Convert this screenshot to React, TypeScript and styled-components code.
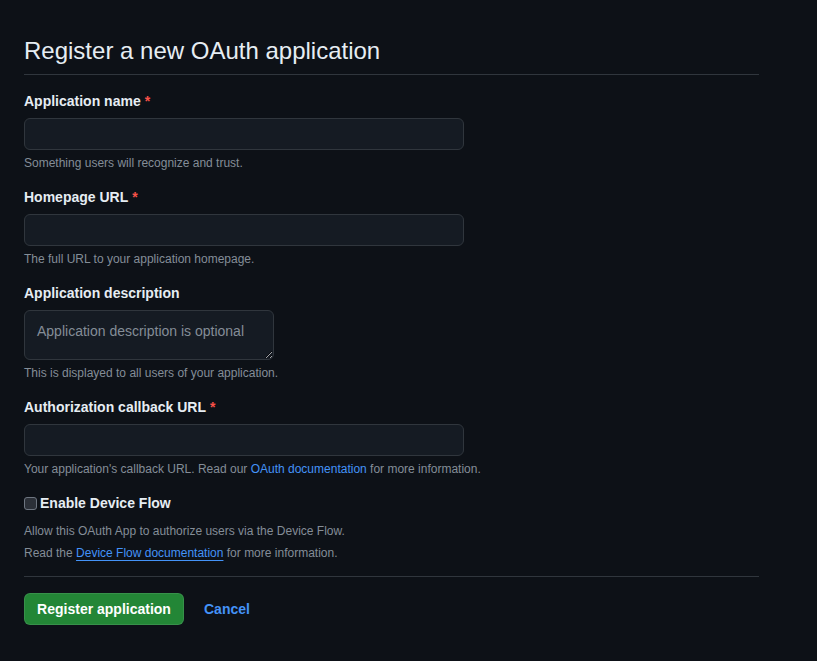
import React from "react";
import styled, { createGlobalStyle } from "styled-components";

const Global = createGlobalStyle`
  html, body { margin: 0; padding: 0; background: #0d1117; }
  body {
    font-family: "Liberation Sans", Arial, sans-serif;
    color: #e6edf3;
    font-size: 14px;
  }
`;

const Page = styled.div`
  padding: 36px 58px 0 24px;
  width: 735px;
`;

const Subhead = styled.div`
  padding-bottom: 8px;
  border-bottom: 1px solid #30363d;
  margin-bottom: 16px;
`;

const Title = styled.h1`
  margin: 0;
  font-size: 24px;
  font-weight: 400;
  line-height: 1.25;
  color: #e6edf3;
`;

const Field = styled.div`
  display: flex;
  flex-direction: column;
  margin-bottom: 15px;
`;

const Label = styled.label`
  font-weight: 700;
  font-size: 14px;
  line-height: 21px;
  margin-bottom: 6px;
  color: #e6edf3;
`;

const Required = styled.span`
  color: #f85149;
  margin-left: 4px;
`;

const Input = styled.input`
  box-sizing: border-box;
  width: 440px;
  height: 32px;
  background: #151b23;
  border: 1px solid #30363d;
  border-radius: 6px;
  padding: 5px 12px;
  color: #e6edf3;
  font: inherit;
  outline: none;
`;

const TextArea = styled.textarea`
  box-sizing: border-box;
  width: 250px;
  height: 50px;
  background: #151b23;
  border: 1px solid #30363d;
  border-radius: 6px;
  padding: 11px 12px 5px;
  color: #e6edf3;
  font: inherit;
  font-size: 14px;
  line-height: 18px;
  outline: none;
  resize: vertical;
  &::placeholder { color: #848d97; }
`;

const Note = styled.p<{ $flush?: boolean }>`
  margin: ${(p) => (p.$flush ? "0" : "4px 0 0")};
  font-size: 12px;
  line-height: 18px;
  color: #848d97;
`;

const Link = styled.a<{ $underline?: boolean }>`
  color: #4493f8;
  text-decoration: ${(p) => (p.$underline ? "underline" : "none")};
  text-underline-offset: 3px;
`;

const CheckRow = styled.label`
  display: flex;
  align-items: center;
  gap: 3px;
  font-weight: 700;
  font-size: 14px;
  line-height: 21px;
`;

const Box = styled.span`
  box-sizing: border-box;
  width: 13px;
  height: 13px;
  border-radius: 3px;
  background: #2b3038;
  border: 1px solid #6e7681;
`;

const CheckNotes = styled.div`
  margin-top: 8px;
  display: flex;
  flex-direction: column;
  gap: 4px;
`;

const Divider = styled.hr`
  border: 0;
  border-top: 1px solid #30363d;
  margin: 14px 0 16px;
`;

const Actions = styled.div`
  display: flex;
  align-items: center;
  gap: 20px;
`;

const PrimaryButton = styled.button`
  box-sizing: border-box;
  width: 160px;
  height: 32px;
  background: #238636;
  border: 1px solid rgba(240, 246, 252, 0.1);
  border-radius: 6px;
  color: #ffffff;
  font: inherit;
  font-weight: 700;
  font-size: 14px;
`;

const CancelLink = styled.a`
  color: #4493f8;
  font-weight: 700;
  font-size: 14px;
  text-decoration: none;
`;

export default function App() {
  return (
    <>
      <Global />
      <Page>
        <Subhead>
          <Title>Register a new OAuth application</Title>
        </Subhead>
        <Field>
          <Label>
            Application name<Required>*</Required>
          </Label>
          <Input />
          <Note>Something users will recognize and trust.</Note>
        </Field>
        <Field>
          <Label>
            Homepage URL<Required>*</Required>
          </Label>
          <Input />
          <Note>The full URL to your application homepage.</Note>
        </Field>
        <Field>
          <Label>Application description</Label>
          <TextArea placeholder="Application description is optional" />
          <Note>This is displayed to all users of your application.</Note>
        </Field>
        <Field>
          <Label>
            Authorization callback URL<Required>*</Required>
          </Label>
          <Input />
          <Note>
            Your application's callback URL. Read our{" "}
            <Link>OAuth documentation</Link> for more information.
          </Note>
        </Field>
        <div>
          <CheckRow>
            <Box />
            Enable Device Flow
          </CheckRow>
          <CheckNotes>
            <Note $flush>Allow this OAuth App to authorize users via the Device Flow.</Note>
            <Note $flush>
              Read the <Link $underline>Device Flow documentation</Link> for more information.
            </Note>
          </CheckNotes>
        </div>
        <Divider />
        <Actions>
          <PrimaryButton>Register application</PrimaryButton>
          <CancelLink>Cancel</CancelLink>
        </Actions>
      </Page>
    </>
  );
}
